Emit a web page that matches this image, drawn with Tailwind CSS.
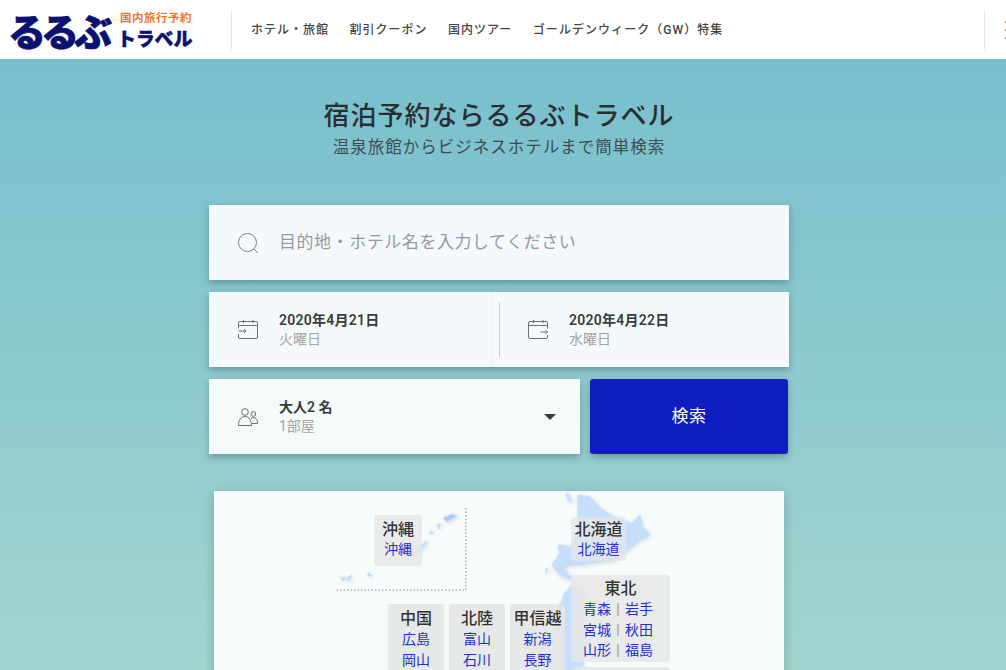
<!DOCTYPE html>
<html lang="ja">
<head>
<meta charset="utf-8">
<script src="https://cdn.jsdelivr.net/npm/@tailwindcss/browser@4"></script>
</head>
<body class="h-[670px] overflow-hidden bg-white font-['Roboto','Noto_Sans_CJK_JP',sans-serif] text-[#333]">
<header class="flex h-[59px] items-center bg-white">
  <a class="flex w-[231px] items-center pl-[8px] text-[#0a1170]">
    <span class="w-[112px] shrink-0 whitespace-nowrap font-['Noto_Sans_CJK_JP',sans-serif] text-[38px] leading-[38px] font-black tracking-[-5px] [-webkit-text-stroke:0.7px_#0a1170]">るるぶ</span>
    <span class="flex flex-col font-['Noto_Sans_CJK_JP',sans-serif]">
      <span class="whitespace-nowrap text-[11.5px] leading-[12px] font-bold tracking-[0.5px] text-[#f2762a]">国内旅行予約</span>
      <span class="mt-[5px] -ml-[3px] whitespace-nowrap text-[19px] leading-[20px] font-black tracking-[-0.2px] [-webkit-text-stroke:0.4px_#0a1170]">トラベル</span>
    </span>
  </a>
  <div class="h-[40px] w-px bg-[#e8e8e8]"></div>
  <nav class="flex items-center gap-[20.5px] pl-[19px] text-[12px] font-medium tracking-[1px] text-[#444]">
    <a>ホテル・旅館</a><a>割引クーポン</a><a>国内ツアー</a><a class="tracking-[1.05px]">ゴールデンウィーク（GW）特集</a>
  </nav>
  <div class="ml-auto h-[40px] w-px bg-[#e8e8e8]"></div>
  <div class="flex w-[21px] flex-col items-end gap-[6px]">
    <i class="h-[2px] w-px bg-[#b5813f]"></i><i class="h-[2px] w-px bg-[#b5813f]"></i><i class="h-[2px] w-px bg-[#b5813f]"></i>
  </div>
</header>

<main class="h-[611px] bg-gradient-to-b from-[#78bfcd] to-[#a1d4ce]">
  <div class="flex flex-col items-center pt-[38px] pr-[8px]">
    <h1 class="text-[26px] leading-[38px] font-medium tracking-[1px] text-[#2a2f33]">宿泊予約ならるるぶトラベル</h1>
    <p class="mt-[1px] text-[16.5px] leading-[24px] tracking-[1px] text-[#3f4c52]">温泉旅館からビジネスホテルまで簡単検索</p>
  </div>

  <div class="mx-[209px] mt-[45px] flex w-[580px] flex-col gap-[12px]">
    <div class="flex h-[75px] items-center bg-[#f3f9fc] shadow-[0_3px_7px_rgba(0,0,0,0.25)]">
      <svg class="ml-[29px] h-[20px] w-[20px] text-[#808080]" viewBox="0 0 20 20" fill="none" stroke="currentColor" stroke-width="1"><circle cx="9.5" cy="9.5" r="9"/><path d="M16 16 L20 20"/></svg>
      <span class="ml-[21px] text-[17px] tracking-[0.55px] text-[#999]">目的地・ホテル名を入力してください</span>
    </div>

    <div class="flex h-[75px] bg-[#f4fafb] shadow-[0_3px_7px_rgba(0,0,0,0.25)]">
      <div class="flex w-[284px] items-center pl-[29px]">
        <svg class="h-[20px] w-[20px] text-[#6f6f6f]" viewBox="0 0 20 20" fill="none" stroke="currentColor" stroke-width="1"><path d="M0.5 8.5 V3 Q0.5 1.5 2 1.5 H18 Q19.5 1.5 19.5 3 V17 Q19.5 18.5 18 18.5 H2 Q0.5 18.5 0.5 17 V14 M0.5 5.5 H19.5 M5.5 0 V3 M15 0 V3 M0.5 11 H8 M6 9 L8 11 L6 13"/></svg>
        <div class="ml-[21px] flex flex-col">
          <span class="text-[14px] leading-[18px] font-semibold tracking-[0.25px] text-[#3a3a3a]">2020年4月21日</span>
          <span class="text-[14px] leading-[20px] text-[#a3a3a3]">火曜日</span>
        </div>
      </div>
      <div class="flex flex-1 items-center shadow-[-2px_0_3px_rgba(0,0,0,0.03)]">
        <div class="ml-[6px] h-[55px] w-px bg-[#c9cccc]"></div>
        <svg class="ml-[28px] h-[20px] w-[20px] text-[#6f6f6f]" viewBox="0 0 20 20" fill="none" stroke="currentColor" stroke-width="1"><path d="M19.5 8.5 V3 Q19.5 1.5 18 1.5 H2 Q0.5 1.5 0.5 3 V17 Q0.5 18.5 2 18.5 H18 Q19.5 18.5 19.5 17 V15 M0.5 5.5 H19.5 M5.5 0 V3 M15 0 V3 M12.5 12 H19.5 M17.5 10 L19.5 12 L17.5 14"/></svg>
        <div class="ml-[21px] flex flex-col">
          <span class="text-[14px] leading-[18px] font-semibold tracking-[0.25px] text-[#3a3a3a]">2020年4月22日</span>
          <span class="text-[14px] leading-[20px] text-[#a3a3a3]">水曜日</span>
        </div>
      </div>
    </div>

    <div class="flex h-[75px] gap-[10px]">
      <div class="flex w-[371px] items-center bg-[#f5fbfb] pl-[29px] shadow-[0_3px_7px_rgba(0,0,0,0.25)]">
        <svg class="h-[18px] w-[20px] text-[#6f6f6f]" viewBox="0 0 20 18" fill="none" stroke="currentColor" stroke-width="1"><circle cx="7" cy="4" r="3.3"/><path d="M0.5 17.5 C0.5 12 3 8.5 7 8.5 C11 8.5 13.5 12 13.5 17.5 Z"/><circle cx="15.3" cy="6" r="2.4"/><path d="M13 10.5 C14 9.3 17 9.2 18 10.5 C19 11.6 19.6 13.5 19.6 15.5 H14"/></svg>
        <div class="ml-[21px] flex flex-col">
          <span class="text-[14px] leading-[18px] font-semibold text-[#3a3a3a]">大人2 名</span>
          <span class="text-[14px] leading-[20px] text-[#a3a3a3]">1部屋</span>
        </div>
        <div class="mr-[24px] ml-auto h-0 w-0 border-x-[6px] border-t-[6px] border-x-transparent border-t-[#3a3a3a]"></div>
      </div>
      <button class="h-[75px] w-[198px] rounded-[3px] bg-[#0e1dbf] text-[17px] tracking-[0.5px] text-white shadow-[0_3px_7px_rgba(0,0,0,0.25)]">検索</button>
    </div>
  </div>

  <div class="relative mt-[37px] ml-[214px] h-[400px] w-[570px] bg-[#f6fcfc] shadow-[0_3px_10px_rgba(0,0,0,0.2)]">
    <svg class="absolute inset-0 h-[400px] w-[570px]" viewBox="214 491 570 400">
      <g class="drop-shadow-[1px_1px_2px_rgba(0,0,0,0.14)]" fill="#c6defc" stroke="#c6defc" stroke-width="1" stroke-linejoin="round">
        <path d="M578 495 L590 497 L600 508 L615 518 L632 523 L640 515 L642 527 L650 535 L640 540 L627 550 L615 560 L597 562 L580 565 L567 565 L563 570 L573 578 L570 580 L560 575 L552 565 L560 553 L558 545 L570 547 L580 532 L578 515 Z"/>
        <path d="M566 493 L569 495 L572 502 L568 500 Z"/>
        <path d="M546 568 L548 569 L546 573 Z"/>
        <path d="M571 586 L583 590 L584 640 L582 670 L562 670 L560 640 L557 605 L562 603 L564 594 Z"/>
        <path d="M443 518 L452 514 L457 516 L447 522 Z" fill="#a9c9fa"/>
        <path d="M437 524 L440 524 L439 529 Z"/>
        <path d="M430 531 L434 533 L430 534 Z"/>
        <path d="M414 553 L426 541 L427 543 L416 555 Z"/>
        <path d="M340 577 L346 578 L343 581 Z"/>
        <path d="M347 578 L352 575 L349 581 Z"/>
        <path d="M368 572 L372 576 L368 576 Z"/>
      </g>
      <path d="M466 508 V590 H335" fill="none" stroke="#8a8a8a" stroke-width="1" stroke-dasharray="1.5 2"/>
    </svg>

    <div class="absolute top-[24px] left-[160px] flex h-[51px] w-[48px] flex-col items-center rounded-[3px] bg-[#e6e6e6]/85 pt-[4px]">
      <span class="text-[16px] leading-[21px] font-medium text-[#333]">沖縄</span>
      <a class="text-[14px] leading-[18px] text-[#2230cc]">沖縄</a>
    </div>
    <div class="absolute top-[26px] left-[357px] flex h-[44px] w-[55px] flex-col items-center rounded-[3px] bg-[#e6e6e6]/75 pt-[3px]">
      <span class="text-[16px] leading-[20px] font-medium text-[#333]">北海道</span>
      <a class="text-[14px] leading-[19px] text-[#2230cc]">北海道</a>
    </div>
    <div class="absolute top-[84px] left-[357px] flex h-[87px] w-[99px] flex-col items-center rounded-[3px] bg-[#e6e6e6]/85 pt-[4px]">
      <span class="text-[16px] leading-[20px] font-medium text-[#333]">東北</span>
      <div class="mr-[5px] grid grid-cols-[28px_14px_28px] text-[14px] leading-[20.5px] text-[#2230cc]">
        <a>青森</a><i class="mx-auto my-[4px] w-[2px] bg-[#bbb]"></i><a>岩手</a>
        <a>宮城</a><i class="mx-auto my-[4px] w-[2px] bg-[#bbb]"></i><a>秋田</a>
        <a>山形</a><i class="mx-auto my-[4px] w-[2px] bg-[#bbb]"></i><a>福島</a>
      </div>
    </div>
    <div class="absolute top-[176px] left-[358px] h-[60px] w-[98px] rounded-[3px] bg-[#e6e6e6]/90"></div>
    <div class="absolute top-[113px] left-[174px] flex h-[100px] w-[56px] flex-col items-center rounded-[3px] bg-[#e6e6e6]/90 pt-[4px]">
      <span class="text-[16px] leading-[21px] font-medium text-[#333]">中国</span>
      <a class="text-[14px] leading-[20.5px] text-[#2230cc]">広島</a>
      <a class="text-[14px] leading-[20.5px] text-[#2230cc]">岡山</a>
    </div>
    <div class="absolute top-[113px] left-[235px] flex h-[100px] w-[56px] flex-col items-center rounded-[3px] bg-[#e6e6e6]/90 pt-[4px]">
      <span class="text-[16px] leading-[21px] font-medium text-[#333]">北陸</span>
      <a class="text-[14px] leading-[20.5px] text-[#2230cc]">富山</a>
      <a class="text-[14px] leading-[20.5px] text-[#2230cc]">石川</a>
    </div>
    <div class="absolute top-[113px] left-[296px] flex h-[100px] w-[55px] flex-col items-center rounded-[3px] bg-[#e6e6e6]/90 pt-[4px]">
      <span class="text-[16px] leading-[21px] font-medium whitespace-nowrap text-[#333]">甲信越</span>
      <a class="text-[14px] leading-[20.5px] text-[#2230cc]">新潟</a>
      <a class="text-[14px] leading-[20.5px] text-[#2230cc]">長野</a>
    </div>
  </div>
</main>
</body>
</html>
